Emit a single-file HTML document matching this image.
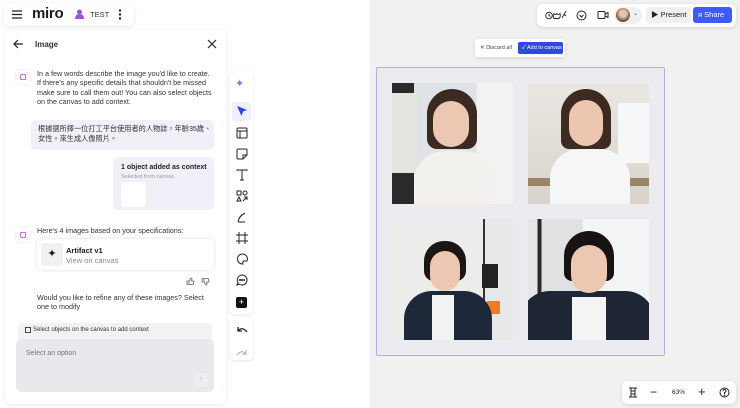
<!DOCTYPE html>
<html><head><meta charset="utf-8"><style>
*{box-sizing:border-box;margin:0;padding:0}
body{width:740px;height:408px;overflow:hidden;position:relative;background:#fff;font-family:"Liberation Sans","Noto Sans CJK TC",sans-serif;color:#1a1a1a}
.abs{position:absolute}
.canvas{left:370px;top:0;width:370px;height:408px;background:#f1f1f1}
.card{background:#fff;border-radius:6px;box-shadow:0 1px 4px rgba(0,0,0,.12)}
.t{font-size:7.2px;line-height:9.3px;color:#333;white-space:nowrap}
.ph{position:absolute;overflow:hidden}
.ico{position:absolute;left:236px;width:12px;height:12px}
</style></head><body>
<!-- top-left bar -->
<div class="abs card" style="left:4px;top:3px;width:130px;height:23px;box-shadow:0 1px 4px rgba(0,0,0,.1)"></div>
<svg class="abs" style="left:12px;top:10px" width="10" height="9"><path d="M0 1h10M0 4.5h10M0 8h10" stroke="#222" stroke-width="1.3"/></svg>
<div class="abs" style="left:32px;top:5px;font-size:15px;font-weight:bold;letter-spacing:-.3px">miro</div>
<svg class="abs" style="left:75px;top:9px" width="9" height="10"><circle cx="4.5" cy="3" r="2.5" fill="#9b51e0"/><path d="M0 10q0-5 4.5-5t4.5 5z" fill="#9b51e0"/></svg>
<div class="abs" style="left:90px;top:10px;font-size:7.5px;color:#333">TEST</div>
<svg class="abs" style="left:118px;top:9px" width="4" height="11"><circle cx="2" cy="1.5" r="1.2" fill="#222"/><circle cx="2" cy="5.5" r="1.2" fill="#222"/><circle cx="2" cy="9.5" r="1.2" fill="#222"/></svg>
<!-- panel -->
<div class="abs" style="left:5px;top:30px;width:221px;height:374px;background:#fff;border-radius:6px;box-shadow:0 1px 5px rgba(0,0,0,.1)"></div>
<svg class="abs" style="left:13px;top:39px" width="11" height="10"><path d="M10 5H1M5 1L1 5l4 4" stroke="#222" stroke-width="1.2" fill="none"/></svg>
<div class="abs" style="left:35px;top:40px;font-size:8px;font-weight:bold;color:#333">Image</div>
<svg class="abs" style="left:207px;top:39px" width="10" height="10"><path d="M1 1l8 8M9 1l-8 8" stroke="#222" stroke-width="1.2"/></svg>
<div class="abs" style="left:16px;top:70px;width:14px;height:14px;border-radius:3px;box-shadow:0 0 2px rgba(0,0,0,.15);background:#fff"><div style="margin:4px;width:6px;height:6px;border:1px solid #d070e0;border-radius:1px"></div></div>
<div class="abs t" style="left:37px;top:69px">In a few words describe the image you'd like to create.<br>If there's any specific details that shouldn't be missed<br>make sure to call them out! You can also select objects<br>on the canvas to add context.</div>
<div class="abs" style="left:31px;top:120px;width:183px;height:30px;background:#f0f1f8;border-radius:5px"></div>
<div class="abs" style="left:38px;top:124px;font-size:7.2px;line-height:10px;color:#333">根據選所擇一位打工平台使用者的人物誌，年齡35歲、<br>女性。來生成人像照片。</div>
<div class="abs" style="left:113px;top:157px;width:101px;height:53px;background:#f0f1f8;border-radius:5px"></div>
<div class="abs" style="left:121px;top:164px;font-size:7px;font-weight:bold;color:#222">1 object added as context</div>
<div class="abs" style="left:121px;top:174px;font-size:5.5px;color:#999">Selected from canvas</div>
<div class="abs" style="left:121px;top:182px;width:25px;height:25px;background:#fff;border-radius:4px"></div>
<div class="abs" style="left:16px;top:228px;width:14px;height:14px;border-radius:3px;box-shadow:0 0 2px rgba(0,0,0,.15);background:#fff"><div style="margin:4px;width:6px;height:6px;border:1px solid #d070e0;border-radius:1px"></div></div>
<div class="abs t" style="left:37px;top:226px">Here's 4 images based on your specifications:</div>
<div class="abs" style="left:37px;top:239px;width:177px;height:31px;border-radius:4px;box-shadow:0 0 3px rgba(0,0,0,.15);background:#fff"></div>
<div class="abs" style="left:41px;top:243px;width:22px;height:23px;background:#f1f1f2;border-radius:3px;font-size:11px;text-align:center;line-height:23px">✦</div>
<div class="abs" style="left:66px;top:246px;font-size:7.5px;font-weight:bold">Artifact v1</div>
<div class="abs" style="left:66px;top:256px;font-size:7.5px;color:#888">View on canvas</div>
<svg class="abs" style="left:186px;top:277px" width="9" height="8" fill="none" stroke="#666" stroke-width=".8"><path d="M1 4h2v3.5H1zM3 4l2-3q1 0 1 1l-.5 2H8l-.7 3.5H3"/></svg>
<svg class="abs" style="left:201px;top:278px" width="9" height="8" fill="none" stroke="#666" stroke-width=".8"><path d="M1 4h2V.5H1zM3 4l2 3q1 0 1-1l-.5-2H8L7.3.5H3"/></svg>
<div class="abs t" style="left:37px;top:293px">Would you like to refine any of these images? Select<br>one to modify</div>
<div class="abs" style="left:18px;top:323px;width:194px;height:18px;background:#f2f2f4;border-radius:4px 4px 0 0"></div>
<div class="abs" style="left:25px;top:327px;width:6px;height:6px;border:1px solid #444"></div>
<div class="abs" style="left:33px;top:327px;font-size:6px;color:#333">Select objects on the canvas to add context</div>
<div class="abs" style="left:16px;top:339px;width:198px;height:53px;background:#e8e9ed;border-radius:5px"></div>
<div class="abs" style="left:26px;top:350px;font-size:7px;color:#777">Select an option</div>
<div class="abs" style="left:194px;top:373px;width:14px;height:14px;background:#eceef0;border-radius:3px;font-size:7px;color:#aaa;text-align:center;line-height:14px">↑</div>
<!-- toolbar -->
<div class="abs" style="left:230px;top:72px;width:23px;height:242px;background:#fff;border-radius:4px;box-shadow:0 1px 3px rgba(0,0,0,.1)"></div>
<div class="abs" style="left:230px;top:318px;width:23px;height:42px;background:#fff;border-radius:4px;box-shadow:0 1px 3px rgba(0,0,0,.1)"></div>
<div class="abs" style="left:232px;top:102px;width:19px;height:19px;background:#eef0fc;border-radius:3px"></div>
<div class="abs" style="left:235px;top:77px;font-size:11px;color:#9b6cf0">✦</div>
<svg class="ico" style="top:105px" viewBox="0 0 12 12"><path d="M1 1l10 4-4 1.5L5.5 11z" fill="#2a44e0"/></svg>
<svg class="ico" style="top:127px" viewBox="0 0 12 12" fill="none" stroke="#222"><rect x="1" y="1" width="10" height="10" rx="1"/><path d="M1 4h10M4 4v7"/></svg>
<svg class="ico" style="top:148px" viewBox="0 0 12 12" fill="none" stroke="#222"><path d="M1 2q0-1 1-1h8q1 0 1 1v5l-4 4H2q-1 0-1-1z M7 11V7h4"/></svg>
<svg class="ico" style="top:169px" viewBox="0 0 12 12" fill="none" stroke="#222"><path d="M1 2V1h10v1M6 1v10M4 11h4"/></svg>
<svg class="ico" style="top:190px" viewBox="0 0 12 12" fill="none" stroke="#222"><rect x="1" y="1" width="4" height="4"/><circle cx="9" cy="3" r="2"/><path d="M1 11l2-4 2 4z M7 11l4-4M8 7h3v3"/></svg>
<svg class="ico" style="top:211px" viewBox="0 0 12 12" fill="none" stroke="#222"><path d="M2 11q1-6 7-9M2 11h7"/></svg>
<svg class="ico" style="top:232px" viewBox="0 0 12 12" fill="none" stroke="#222"><path d="M3 0v12M9 0v12M0 3h12M0 9h12"/></svg>
<svg class="ico" style="top:253px" viewBox="0 0 12 12" fill="none" stroke="#222"><path d="M6 1a5 5 0 1 0 1 10q-1-2 1-3h3a5 5 0 0 0-5-7z"/></svg>
<svg class="ico" style="top:274px" viewBox="0 0 12 12" fill="none" stroke="#222"><path d="M6 1a5 5 0 1 1-3 9L1 11l1-2.5A5 5 0 0 1 6 1z"/><circle cx="4" cy="6" r=".5" fill="#222"/><circle cx="6" cy="6" r=".5" fill="#222"/><circle cx="8" cy="6" r=".5" fill="#222"/></svg>
<div class="abs" style="left:236px;top:297px;width:11px;height:11px;background:#111;border-radius:2px;color:#fff;font-size:9px;line-height:11px;text-align:center">+</div>
<svg class="ico" style="top:324px" viewBox="0 0 12 12" fill="none" stroke="#222" stroke-width="1.3"><path d="M2 3v4h4M2 7q4-5 9 1"/></svg>
<svg class="ico" style="top:345px" viewBox="0 0 12 12" fill="none" stroke="#aaa"><path d="M10 5v4H6M10 9q-4-5-9 1"/></svg>
<!-- canvas -->
<div class="abs canvas"></div>
<div class="abs card" style="left:537px;top:4px;width:199px;height:23px"></div>
<svg class="abs" style="left:545px;top:9px" width="22" height="11" fill="none" stroke="#222" stroke-width=".9"><circle cx="4" cy="6.5" r="3.3"/><path d="M4 4.5v2l1.5 1"/><path d="M9 9.5q-1.5-3 0-5 1.5 2 3 0 1.5 2 3 0q1 3-1 5z"/><path d="M17 9l4-7M19 5l2 2"/></svg>
<svg class="abs" style="left:576px;top:10px" width="11" height="11" fill="none" stroke="#222"><circle cx="5.5" cy="5.5" r="4.5"/><path d="M3.5 5l2 2 2-2"/></svg>
<svg class="abs" style="left:597px;top:10px" width="12" height="10" fill="none" stroke="#222"><rect x="1" y="1.5" width="7" height="7" rx="1"/><path d="M8 4l3-1.5v5L8 6"/></svg>
<div class="abs" style="left:614px;top:7px;width:28px;height:17px;background:#f0f0f2;border-radius:9px"></div>
<div class="abs" style="left:616px;top:8px;width:14px;height:14px;border-radius:50%;background:radial-gradient(circle at 50% 40%,#e8c4a8 30%,#6b4a38 70%)"></div>
<div class="abs" style="left:633px;top:10px;font-size:6px;color:#555">⌄</div>
<div class="abs" style="left:646px;top:7px;width:45px;height:16px;background:#f0f0f2;border-radius:3px;font-size:7.5px;line-height:16px;padding-left:5px;color:#222">▶ Present</div>
<div class="abs" style="left:693px;top:7px;width:39px;height:16px;background:#3d5afe;border-radius:3px;font-size:7.5px;line-height:16px;padding-left:5px;color:#fff">ᴙ Share</div>
<div class="abs card" style="left:475px;top:39px;width:90px;height:18px;border-radius:3px"></div>
<div class="abs" style="left:480px;top:42px;font-size:5.5px;line-height:12px;color:#444">✕ Discard all</div>
<div class="abs" style="left:518px;top:42px;width:45px;height:12px;background:#2f49e0;border-radius:2px;font-size:5.5px;line-height:12px;color:#fff;padding-left:4px">✓ Add to canvas</div>
<!-- frame -->
<div class="abs" style="left:376px;top:67px;width:289px;height:289px;background:#ebebf0;border:1px solid #b7a8f0;border-bottom-color:#8fb8f0;border-radius:2px"></div>
<div class="ph" style="left:392px;top:83px;width:121px;height:121px;background:linear-gradient(90deg,#2a2a2a 0 18%,#dfe2e6 18% 70%,#f2f2f2 70%)">
 <div class="abs" style="left:0;top:10px;width:25px;height:80px;background:#e5e5e0"></div>
 <div class="abs" style="left:22px;top:68px;width:80px;height:60px;background:#f3f1ee;border-radius:30px 30px 0 0"></div>
 <div class="abs" style="left:35px;top:6px;width:50px;height:60px;background:#3a2a22;border-radius:25px 25px 10px 10px"></div>
 <div class="abs" style="left:41px;top:18px;width:36px;height:46px;background:#ecc8b2;border-radius:18px 18px 18px 18px"></div>
</div>
<div class="ph" style="left:528px;top:83px;width:121px;height:121px;background:linear-gradient(180deg,#e9e7e2,#d8d4cc)">
 <div class="abs" style="left:90px;top:20px;width:31px;height:60px;background:#f6f7f8"></div>
 <div class="abs" style="left:0;top:95px;width:121px;height:8px;background:#9a8566"></div>
 <div class="abs" style="left:22px;top:66px;width:80px;height:60px;background:#f6f6f6;border-radius:30px 30px 0 0"></div>
 <div class="abs" style="left:33px;top:6px;width:50px;height:60px;background:#3d2a20;border-radius:25px 25px 8px 8px"></div>
 <div class="abs" style="left:41px;top:17px;width:34px;height:46px;background:#ecc6ae;border-radius:17px"></div>
</div>
<div class="ph" style="left:392px;top:219px;width:121px;height:121px;background:linear-gradient(90deg,#ececea 0 75%,#333 75% 77%,#e8e8e6 77%)">
 <div class="abs" style="left:90px;top:45px;width:16px;height:24px;background:#222"></div>
 <div class="abs" style="left:95px;top:82px;width:13px;height:13px;background:#f07a2a"></div>
 <div class="abs" style="left:12px;top:72px;width:88px;height:55px;background:#1f2838;border-radius:28px 28px 0 0"></div>
 <div class="abs" style="left:40px;top:76px;width:22px;height:45px;background:#f2f2f2"></div>
 <div class="abs" style="left:32px;top:22px;width:42px;height:40px;background:#1c1614;border-radius:20px 20px 10px 10px"></div>
 <div class="abs" style="left:38px;top:32px;width:30px;height:40px;background:#ecc8b2;border-radius:15px"></div>
</div>
<div class="ph" style="left:528px;top:219px;width:121px;height:121px;background:linear-gradient(90deg,#e4e6e8 0 8%,#2a2a2a 8% 11%,#dfe1e3 11% 45%,#f3f4f5 45%)">
 <div class="abs" style="left:0;top:88px;width:121px;height:33px;background:#8a7a62"></div>
 <div class="abs" style="left:-8px;top:72px;width:135px;height:55px;background:#1e2636;border-radius:30px 30px 0 0"></div>
 <div class="abs" style="left:44px;top:78px;width:34px;height:45px;background:#f4f4f4"></div>
 <div class="abs" style="left:36px;top:12px;width:50px;height:50px;background:#181312;border-radius:25px 25px 8px 8px"></div>
 <div class="abs" style="left:43px;top:26px;width:36px;height:48px;background:#ecc8b2;border-radius:18px"></div>
</div>
<!-- zoom bar -->
<div class="abs card" style="left:622px;top:381px;width:114px;height:23px"></div>
<svg class="abs" style="left:628px;top:387px" width="10" height="11" fill="none" stroke="#222"><path d="M1 1h8M1 10h8M3 1v9M7 1v9M3 4h4M3 7h4"/></svg>
<div class="abs" style="left:650px;top:385px;font-size:12px;color:#222">−</div>
<div class="abs" style="left:672px;top:389px;font-size:6.5px;color:#222">63%</div>
<div class="abs" style="left:698px;top:384px;font-size:13px;color:#222">+</div>
<svg class="abs" style="left:719px;top:387px" width="11" height="11" fill="none" stroke="#222"><circle cx="5.5" cy="5.5" r="4.5"/><path d="M4 4.2q0-1.7 1.5-1.7t1.5 1.6q0 1-1.5 1.5V7"/><circle cx="5.5" cy="8.4" r=".4" fill="#222"/></svg>
</body></html>
